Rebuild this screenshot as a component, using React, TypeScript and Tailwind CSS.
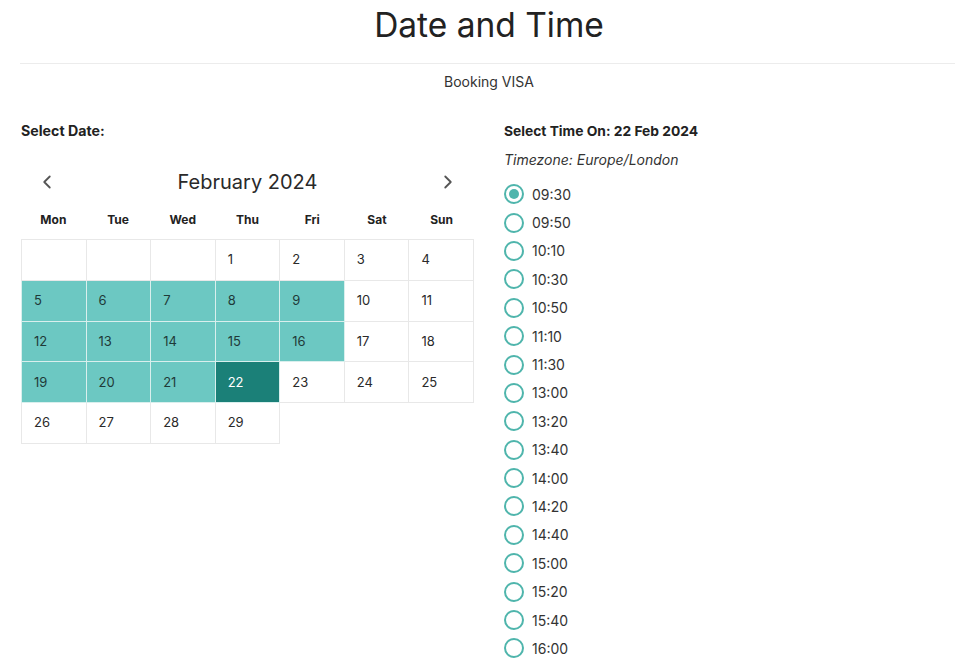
import { ChevronLeft, ChevronRight } from "lucide-react";

const days = ["Mon", "Tue", "Wed", "Thu", "Fri", "Sat", "Sun"];

const times = [
  "09:30", "09:50", "10:10", "10:30", "10:50", "11:10", "11:30", "13:00", "13:20",
  "13:40", "14:00", "14:20", "14:40", "15:00", "15:20", "15:40", "16:00",
];

// 0 = blank with border, -1 = blank without border
const weeks: number[][] = [
  [0, 0, 0, 1, 2, 3, 4],
  [5, 6, 7, 8, 9, 10, 11],
  [12, 13, 14, 15, 16, 17, 18],
  [19, 20, 21, 22, 23, 24, 25],
  [26, 27, 28, 29, -1, -1, -1],
];

const available = new Set([5, 6, 7, 8, 9, 12, 13, 14, 15, 16, 19, 20, 21]);
const selectedDay = 22;

const DayCell = ({ day }: { day: number }) => {
  if (day === -1) return <td className="p-0" />;
  const isSelected = day === selectedDay;
  const isAvailable = available.has(day);
  return (
    <td
      className={
        "h-[40.8px] border p-0 pl-[12px] text-[13px] align-middle " +
        (isSelected
          ? "bg-[#1b8078] text-white border-[#d9efed]"
          : isAvailable
          ? "bg-[#6cc8c2] text-[#1f3a38] border-[#d9efed]"
          : "text-[#2a2a2a] border-[#e8e8e8]")
      }
    >
      {day > 0 ? day : ""}
    </td>
  );
};

export default function App() {
  const selectedTime = "09:30";
  return (
    <div className="w-[970px] h-[670px] overflow-hidden bg-white text-[#222] font-['Inter',_'Noto_Sans',_sans-serif]">
      <h1 className="pt-[5px] pl-[8px] text-center text-[33.5px] leading-[40px] font-normal">Date and Time</h1>
      <div className="ml-[20px] mr-[15px] mt-[18px] border-t border-[#ececec]" />
      <p className="mt-[8px] pl-[8px] text-center text-[14px] leading-[20px] text-[#333]">Booking VISA</p>

      <div className="mt-[29px] flex px-[21px] gap-[30px]">
        <div className="w-[453px]">
          <h2 className="text-[14.2px] leading-[20px] font-bold">Select Date:</h2>
          <div className="mt-[26px] flex h-[30px] items-center justify-between px-[15px]">
            <ChevronLeft size={22} strokeWidth={2} className="text-[#555]" />
            <span className="text-[20px] text-[#2a2a2a]">February 2024</span>
            <ChevronRight size={22} strokeWidth={2} className="text-[#555]" />
          </div>
          <div className="mt-[13px] grid grid-cols-7 h-[20px] items-center">
            {days.map((d) => (
              <div key={d} className="text-center text-[12px] font-bold">
                {d}
              </div>
            ))}
          </div>
          <table className="mt-[9px] w-[453px] table-fixed border-collapse">
            <tbody>
              {weeks.map((w, i) => (
                <tr key={i}>
                  {w.map((d, j) => (
                    <DayCell key={j} day={d} />
                  ))}
                </tr>
              ))}
            </tbody>
          </table>
        </div>

        <div className="flex-1">
          <h2 className="text-[13.8px] leading-[20px] font-bold">Select Time On: 22 Feb 2024</h2>
          <p className="mt-[9px] text-[14px] leading-[20px] italic text-[#333]">Timezone: Europe/London</p>
          <div className="mt-[10px] flex flex-col">
            {times.map((t) => (
              <label key={t} className="flex h-[28.4px] items-center gap-[8px]">
                <span className="flex h-[20px] w-[20px] items-center justify-center rounded-full border-2 border-[#4fb5ac]">
                  {t === selectedTime && <span className="h-[10px] w-[10px] rounded-full bg-[#4fb5ac]" />}
                </span>
                <span className="text-[14px] text-[#333]">{t}</span>
              </label>
            ))}
          </div>
        </div>
      </div>
    </div>
  );
}
